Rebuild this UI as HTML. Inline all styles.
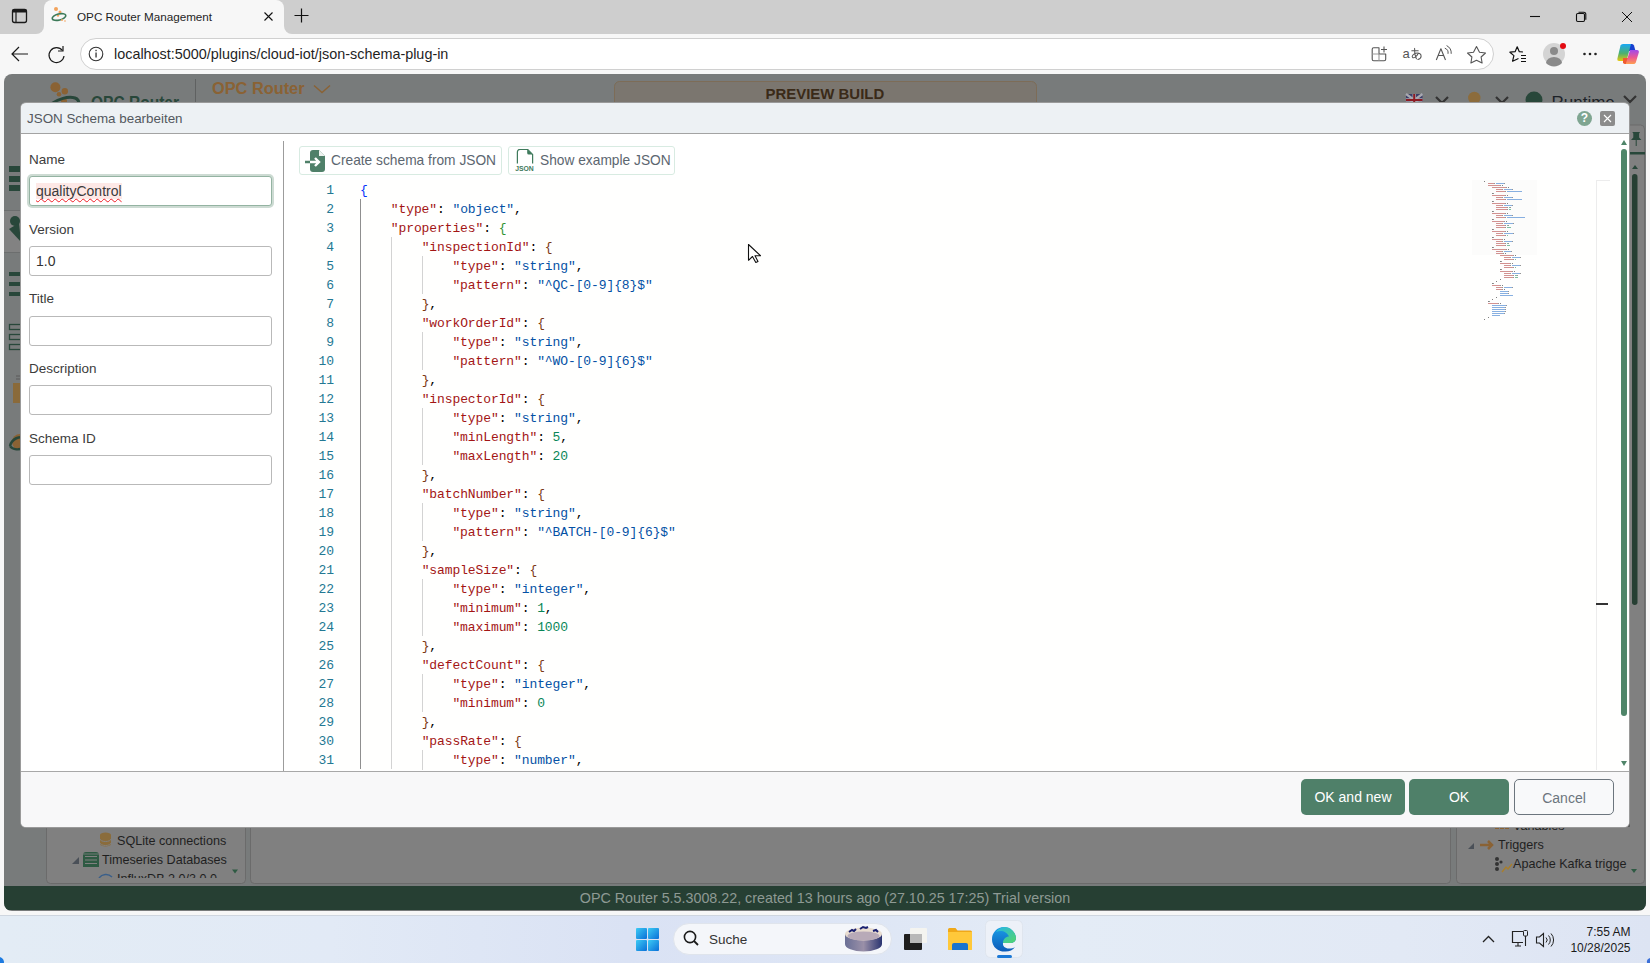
<!DOCTYPE html>
<html><head><meta charset="utf-8">
<style>
*{box-sizing:border-box;margin:0;padding:0}
html,body{width:1650px;height:963px;overflow:hidden;background:#f7f7f7;font-family:"Liberation Sans",sans-serif;position:relative}
.a{position:absolute}
#tabstrip{left:0;top:0;width:1650px;height:33px;background:#cecece}
#tab{left:44px;top:0;width:240px;height:34px;background:#f7f7f7;border-radius:8px 8px 0 0}
#addr{left:0;top:33px;width:1650px;height:41px;background:#f7f7f7}
#url{left:80px;top:38px;width:1412px;height:32px;background:#fff;border:1px solid #d4d4d4;border-radius:16px}
#content{left:4px;top:74px;width:1642px;height:837px;background:#787b7b;border-radius:8px;overflow:hidden}
#dlg{left:20px;top:102px;width:1610px;height:726px;background:linear-gradient(#edf1f4 0 3px,#fff 3px);border-radius:6px;overflow:hidden;border:1px solid #9a9a9a}
#dlghead{left:0;top:0;width:100%;height:30px;background:#edf1f4;border-bottom:1px solid #a3a3a3}
#dlgtitle{left:6px;top:7px;font-size:13.4px;color:#53585e}
#foot{left:0;top:667px;width:100%;height:58px;background:#f8f8f9;border-top:1px solid #a8a8a8}
.lbl{position:absolute;left:8px;font-size:13.5px;color:#3c3c3c}
.inp{position:absolute;left:8px;width:243px;height:30px;border:1px solid #b9b9b9;border-radius:3px;background:#fff;font-size:14px;color:#333}
.btn{position:absolute;top:7px;height:36px;border-radius:5px;font-size:14px;text-align:center;line-height:36px}
.code{font-family:"Liberation Mono",monospace;font-size:13px;letter-spacing:-0.1px;white-space:pre;line-height:19px}
.ln{position:absolute;left:0;top:1px;width:34px;text-align:right;color:#237893;font-family:"Liberation Mono",monospace;font-size:13px;line-height:19px}
.k{color:#a31515}.s{color:#0451a5}.n{color:#098658}.b1{color:#0431fa}.b2{color:#319331}.b3{color:#7b3814}
#status{left:0;top:812px;width:100%;height:24px;background:#263f33;color:#8e9a94;font-size:14.3px;text-align:center;line-height:24px}
.gbtn{background:#4f8069;color:#fff}
.cbtn{background:#f8f9fa;color:#6c757d;border:1px solid #6c757d}
.focus{border:1px solid #94b3a2;box-shadow:0 0 0 2px #cddbd3}
.sp{position:absolute;left:6px;top:6px;background:#fde8e6;text-decoration:underline wavy #f01c23;text-decoration-skip-ink:none;text-underline-offset:1.5px;text-decoration-thickness:1px;color:#3a3a3a}
.tbtn{position:absolute;top:42px;height:29px;border:1px solid #d8ebe2;border-radius:3px;background:#fff;font-size:13.75px;color:#5c6670}
.tbtn .ic{position:absolute;left:4px;top:2px}
.tbtn span{position:absolute;top:6px;white-space:nowrap}
#editor{left:279px;top:76px;width:1320px;height:590px;overflow:hidden;background:#fffffe}
.guide{position:absolute;width:1px;background:#d3d3d3}
#taskbar{left:0;top:915px;width:1650px;height:48px;background:linear-gradient(90deg,#e3ecf5 0%,#e2eaf6 20%,#dae2f4 38%,#dde5f5 50%,#e4ecf6 65%,#e2e9f5 85%,#dde4f3 100%)}
</style></head><body>
<div class="a" style="left:0;top:0;width:44px;height:34px;background:#cecece;border-bottom-right-radius:8px"></div>
<div class="a" style="left:284px;top:0;width:1366px;height:34px;background:#cecece;border-bottom-left-radius:8px"></div>
<div class="a" style="left:36px;top:0;width:256px;height:8px;background:#cecece"></div>
<div id="tab" class="a"></div>
<svg class="a" style="left:0;top:0" width="1650" height="74">
 <rect x="12.5" y="9.5" width="14" height="13" rx="2" fill="none" stroke="#1a1a1a" stroke-width="1.3"/>
 <rect x="12.5" y="9.5" width="14" height="3" fill="#1a1a1a"/>
 <line x1="16" y1="12" x2="16" y2="22" stroke="#1a1a1a" stroke-width="1.2"/>
 <circle cx="56" cy="9" r="2" fill="#f3a35c"/><circle cx="60" cy="12" r="1.5" fill="#f3a35c"/><circle cx="58" cy="15.5" r="1.2" fill="#f3a35c"/>
 <ellipse cx="59" cy="17" rx="7" ry="3" fill="none" stroke="#3c7a58" stroke-width="1.6" transform="rotate(-15 59 17)"/>
 <circle cx="62" cy="20" r="1" fill="#f3a35c"/><circle cx="65" cy="21" r="0.8" fill="#f3a35c"/>
 <text x="77" y="20.5" font-family="Liberation Sans" font-size="11.7" fill="#1f1f1f">OPC Router Management</text>
 <path d="M264.5 12.5l8 8M272.5 12.5l-8 8" stroke="#111" stroke-width="1.1"/>
 <path d="M294.5 15.5h14M301.5 8.5v14" stroke="#111" stroke-width="1.2"/>
 <path d="M1530 16.5h10" stroke="#111" stroke-width="1.1"/>
 <rect x="1576.5" y="13.5" width="8" height="8" rx="1.2" fill="none" stroke="#111" stroke-width="1.1"/>
 <path d="M1578.5 12.2h5.3a2 2 0 0 1 2 2v5.5" fill="none" stroke="#111" stroke-width="1.1"/>
 <path d="M1622 12l10 10M1632 12l-10 10" stroke="#111" stroke-width="1"/>
 <path d="M28 54H12.5M19 47l-7 7 7 7" fill="none" stroke="#1a1a1a" stroke-width="1.2"/>
 <path d="M62.5 50.5A7.5 7.5 0 1 0 64 56" fill="none" stroke="#1a1a1a" stroke-width="1.2"/>
 <path d="M63 46v5h-5" fill="none" stroke="#1a1a1a" stroke-width="1.2"/>
 <rect x="80.5" y="38.5" width="1413" height="31" rx="15.5" fill="#fff" stroke="#d0d0d0"/>
 <circle cx="96" cy="54" r="6.8" fill="none" stroke="#333" stroke-width="1.1"/>
 <rect x="95.4" y="52.5" width="1.3" height="5" fill="#333"/><rect x="95.4" y="49.8" width="1.3" height="1.4" fill="#333"/>
 <text x="114" y="59" font-family="Liberation Sans" font-size="14.4" fill="#1f1f1f">localhost:5000/plugins/cloud-iot/json-schema-plug-in</text>
 <g fill="none" stroke="#555" stroke-width="1.1" stroke-linejoin="round">
  <path d="M1379 47.7h-5.3a1.5 1.5 0 0 0-1.5 1.5v10a1.5 1.5 0 0 0 1.5 1.5h10.5a1.5 1.5 0 0 0 1.5-1.5v-5.2h-6.7z"/>
  <path d="M1379 54v6.7M1372.2 54h6.8" stroke="#999"/>
  <path d="M1384 46.5v6M1381 49.5h6"/>
  <path d="M1436.3 60l4.6-11.3 4.6 11.3M1438.2 55.5h5.4"/>
  <path d="M1444.8 48.2a5 5 0 0 1 3.2 5.6M1446.6 45.6a8.5 8.5 0 0 1 4.6 8.2" stroke-width="1"/>
  <path d="M1467.5 53l6-.8 3-5.7 3 5.7 6 .8-4.4 4 1 6-5.6-2.8-5.6 2.8 1-6z"/>
 </g>
 <g fill="none" stroke="#111" stroke-width="1.2" stroke-linejoin="round">
  <path d="M1518.5 58.5L1512.6 61.2 1513.9 55.6 1509.9 52.2 1515.1 51.7 1517.2 46.8 1519.3 51.7 1523 52"/>
  <path d="M1521 55.5h5M1521 58.5h5M1521 61.5h5" stroke-width="1"/>
 </g>
 <text x="1402.5" y="57.6" font-family="Liberation Sans" font-size="13" fill="#555">a</text>
 <path d="M1411.8 50.8h6.4M1414.6 48.4c-.3 3.5.2 7 1.8 10.4M1418.3 53.2c-1.8 3.8-4.6 5.4-5.8 4.2-1.1-1.2 1.2-4.4 4.6-4.4 2.5 0 4 1.5 4 3.2 0 1.6-1.4 2.8-3.2 3.3" fill="none" stroke="#555" stroke-width="1.05" stroke-linecap="round"/>
 <circle cx="1554" cy="54" r="11" fill="#d4d4d4"/>
 <circle cx="1554" cy="51" r="4" fill="#8a8a8a"/>
 <path d="M1546 63a8 6 0 0 1 16 0a11 11 0 0 1-16 0z" fill="#8a8a8a"/>
 <circle cx="1563" cy="46" r="3" fill="#e30b12"/>
 <circle cx="1584.5" cy="54" r="1.3" fill="#222"/><circle cx="1590" cy="54" r="1.3" fill="#222"/><circle cx="1595.5" cy="54" r="1.3" fill="#222"/>
 <defs><linearGradient id="cp1" x1="0" y1="0" x2="0" y2="1"><stop offset="0" stop-color="#18a8f5"/><stop offset=".55" stop-color="#4cb070"/><stop offset="1" stop-color="#e8c80a"/></linearGradient>
 <linearGradient id="cp2" x1="0" y1="0" x2="0" y2="1"><stop offset="0" stop-color="#a048ec"/><stop offset=".55" stop-color="#ee5890"/><stop offset="1" stop-color="#ffa050"/></linearGradient></defs>
 <g transform="translate(1617 44)">
  <path d="M12 0H15Q16.5 0 17 1.5L18.5 7H11z" fill="#1640d0"/>
  <path d="M3.5 1.5Q4 0 6 0H14L9.5 17H2Q0 17 .3 15z" fill="url(#cp1)"/>
  <path d="M6 14H11.5L9.5 20H8Q6.5 20 6 18.5z" fill="#f05a30"/>
  <path d="M13 6H20Q22.3 6 21.8 8.5L18.8 18.5Q18.2 20 16.5 20H8.8z" fill="url(#cp2)"/>
 </g>
</svg>
<div id="content" class="a">
  <div class="a" style="left:0;top:136px;width:16px;height:43px;background:#828282;border-top:1px solid #6c6e6e;border-bottom:1px solid #6c6e6e"></div>
  <svg class="a" style="left:0;top:0" width="1642" height="838">
   <g fill="#28473a">
    <rect x="5" y="92" width="12" height="6"/><rect x="5" y="102" width="12" height="6"/><rect x="5" y="111" width="12" height="6"/>
    <circle cx="11" cy="147" r="5"/><path d="M5 155l10-6 2 19z"/>
    <rect x="5" y="198" width="12" height="4"/><rect x="5" y="208" width="12" height="4"/><rect x="5" y="218" width="12" height="4"/>
   </g>
   <g fill="none" stroke="#28473a" stroke-width="1.3">
    <rect x="5.5" y="250.5" width="12" height="5"/><rect x="5.5" y="260.5" width="12" height="5"/><rect x="5.5" y="270.5" width="12" height="5"/>
   </g>
   <rect x="9" y="309" width="8" height="20" fill="#8a6a3a"/>
   <path d="M12 302h5M12 305h5" stroke="#5a5a5a" stroke-width="1"/>
   <circle cx="16" cy="368" r="8" fill="#8a6234"/>
   <path d="M6 372c2-8 10-10 14-8M6 372c3 4 9 4 14 2" fill="none" stroke="#28473a" stroke-width="2.5"/>
   <!-- header logo -->
   <circle cx="51.4" cy="13.2" r="5" fill="#8a6234"/><circle cx="60.8" cy="17.3" r="3.2" fill="#8a6234"/><circle cx="55" cy="20.3" r="2.3" fill="#8a6234"/>
   <circle cx="60" cy="27" r="3" fill="#8a6234"/>
   <path d="M47 30c7-5 17-8 24-6 3 1 4 3 4 6" fill="none" stroke="#28473a" stroke-width="3"/>
   <text x="87" y="35" font-family="Liberation Sans" font-weight="bold" font-size="19" fill="#28473a" textLength="88" lengthAdjust="spacingAndGlyphs">OPC Router</text>
   <rect x="191" y="5" width="1" height="25" fill="#5f6161"/>
   <text x="208" y="19.7" font-family="Liberation Sans" font-weight="bold" font-size="15.6" fill="#8a6234" textLength="92.5" lengthAdjust="spacingAndGlyphs">OPC Router</text>
   <path d="M310 11.5l8 7 8-7" fill="none" stroke="#8a6234" stroke-width="1.4"/>
   <circle cx="216" cy="34" r="6" fill="#222"/>
   <rect x="610.5" y="7.5" width="422" height="30" rx="5" fill="#7b766f" stroke="#7d6c57"/>
   <text x="761.5" y="25.3" font-family="Liberation Sans" font-weight="bold" font-size="14" fill="#3a2a18" textLength="118.7" lengthAdjust="spacingAndGlyphs">PREVIEW BUILD</text>
   <g>
    <rect x="1402" y="20" width="16.5" height="12" fill="#3b3f6a"/>
    <path d="M1402 20l16.5 12M1418.5 20l-16.5 12" stroke="#a8a8b0" stroke-width="2.2"/>
    <path d="M1410.2 20v12M1402 26h16.5" stroke="#a8a8b0" stroke-width="3.4"/>
    <path d="M1410.2 20v12M1402 26h16.5" stroke="#8c1a22" stroke-width="2"/>
   </g>
   <path d="M1432 23l6 6 6-6M1492 23l6 6 6-6M1620 22l6 6 6-6" fill="none" stroke="#333" stroke-width="2.2"/>
   <circle cx="1470.3" cy="24" r="6.2" fill="#8c6c3c"/>
   <circle cx="1530" cy="26" r="8.5" fill="#28473a"/>
   <text x="1547.5" y="34" font-family="Liberation Sans" font-size="17" fill="#1c2228">Runtime</text>
   <!-- right strip -->
   <path d="M1452.5 51h184a4 4 0 0 1 4 4v750.5a4 4 0 0 1-4 4h-180a4 4 0 0 1-4-4z" fill="#808080" stroke="#6b6b6b"/>
   <rect x="1624" y="55" width="2" height="698" fill="#5d5d5d"/>
   <path d="M1628.3 58h7.8l-1 1.6v3.8l2.3 2.6h-10.4l2.3-2.6v-3.8z" fill="#28473a"/><rect x="1631.7" y="66" width="1" height="6" fill="#28473a"/>
   <rect x="1626" y="78" width="15" height="2.5" fill="#28473a"/>
   <path d="M1628 95l3-4 3 4z" fill="#28473a"/>
   <rect x="1628" y="100" width="5.5" height="431" rx="2.7" fill="#263f33"/>
   <!-- bottom panels -->
   <defs><clipPath id="cpl"><rect x="43" y="740" width="198" height="64"/></clipPath><clipPath id="cpr"><rect x="1453" y="740" width="170" height="64"/></clipPath></defs>
   <path d="M42.5 700v105.5a4 4 0 0 0 4 4h191a4 4 0 0 0 4-4V700z" fill="#808080" stroke="#6b6b6b"/>
   <path d="M246.5 700v105.5a4 4 0 0 0 4 4h1192a4 4 0 0 0 4-4V700z" fill="#808080" stroke="#6b6b6b"/>
   
   <g font-family="Liberation Sans" font-size="12.6" fill="#1f1f1f">
    <g clip-path="url(#cpl)">
    <text x="113" y="771">SQLite connections</text>
    <text x="98" y="790">Timeseries Databases</text>
    <text x="113" y="809">InfluxDB 2.0/3.0.0</text>
    <path d="M95 804c3-4 9-5 13-1" fill="none" stroke="#3a5f8a" stroke-width="1.5"/>
    </g>
    <g clip-path="url(#cpr)">
    <text x="1494" y="775">Triggers</text>
    <text x="1509" y="794">Apache Kafka trigge</text>
    <text x="1509" y="756">Variables</text>
    <text x="1509" y="813">MQTT trigger</text>
    <rect x="1491" y="750" width="4" height="5" fill="#8a6234"/><rect x="1496" y="750" width="4" height="5" fill="#8a6234"/><rect x="1501" y="750" width="4" height="5" fill="#8a6234"/>
    <circle cx="1494" cy="806" r="1.3" fill="#333"/><circle cx="1499" cy="806" r="1.3" fill="#333"/>
    </g>
   </g>
   <path d="M75 790v-7l-7 7z" fill="#4a5058"/><path d="M1470 775v-6l-6 6z" fill="#4a5058"/>
   <path d="M96 761a5.5 2.5 0 0 1 11 0v9a5.5 2.5 0 0 1-11 0z" fill="#8a6c3c"/><path d="M96 765a5.5 2.5 0 0 0 11 0M96 769a5.5 2.5 0 0 0 11 0" fill="none" stroke="#808080" stroke-width="1"/>
   <path d="M79 781a3 3 0 0 1 3-3h10a3 3 0 0 1 3 3v12h-16z" fill="#2e5a43"/><path d="M81 782.5h12M81 786h12M81 789.5h12" stroke="#808080" stroke-width="1.2"/><path d="M79 780h16" stroke="#808080" stroke-width=".8"/>
   <path d="M228 795.5l3 4 3-4z" fill="#2e5a43"/>
   <path d="M1627 795l3 4 3-4z" fill="#2e5a43"/>
   <path d="M1476 771h12M1484 767l4 4-4 4" fill="none" stroke="#8a6234" stroke-width="2.5"/>
   <circle cx="1493" cy="785" r="2" fill="#333"/><circle cx="1493" cy="790" r="2" fill="#333"/><circle cx="1493" cy="795" r="2" fill="#333"/><circle cx="1497" cy="788" r="1.6" fill="#333"/>
   <path d="M1498 798l4-5 2 2 4-5" fill="none" stroke="#a87e2c" stroke-width="1.4"/>
  </svg>
  <div id="status" class="a">OPC Router 5.5.3008.22, created 13 hours ago (27.10.25 17:25) Trial version</div>
</div>
<div id="dlg" class="a"><div class="a" style="left:0;top:1px;width:100%;height:100%">
  <div id="dlghead" class="a"><div id="dlgtitle" class="a">JSON Schema bearbeiten</div>
  <div class="a" style="left:1556px;top:7px;width:15px;height:15px;border-radius:50%;background:#7fa591;color:#fff;font-size:12px;font-weight:bold;text-align:center;line-height:15px">?</div>
  <svg class="a" style="left:1579px;top:7px" width="15" height="15"><rect width="15" height="15" rx="2" fill="#8c8c8c"/><path d="M4 4l7 7M11 4l-7 7" stroke="#fff" stroke-width="1.1"/></svg>
  </div>
  <div id="foot" class="a">
    <div class="btn gbtn" style="left:1280px;width:104px">OK and new</div>
    <div class="btn gbtn" style="left:1388px;width:100px">OK</div>
    <div class="btn cbtn" style="left:1493px;width:100px">Cancel</div>
  </div>
  <div class="lbl" style="top:48px">Name</div>
  <div class="inp focus" style="top:72px"><span class="sp">qualityControl</span></div>
  <div class="lbl" style="top:118px">Version</div>
  <div class="inp" style="top:142px"><span style="position:absolute;left:6px;top:6px">1.0</span></div>
  <div class="lbl" style="top:187px">Title</div>
  <div class="inp" style="top:212px"></div>
  <div class="lbl" style="top:257px">Description</div>
  <div class="inp" style="top:281px"></div>
  <div class="lbl" style="top:327px">Schema ID</div>
  <div class="inp" style="top:351px"></div>
  <div class="a" style="left:262px;top:37px;width:1px;height:630px;background:#9c9c9c"></div>
  <div class="tbtn" style="left:278px;width:203px"><svg class="ic" width="24" height="24" viewBox="0 0 24 24"><path d="M9 1h6l6 6v13a3 3 0 0 1-3 3H9a3 3 0 0 1-3-3V4a3 3 0 0 1 3-3z" fill="#4f8069"/><path d="M15 1v6h6" fill="#fff" opacity=".9"/><path d="M1 13h14M11 9l4 4-4 4" stroke="#fff" stroke-width="2.4" fill="none"/><path d="M1 13h5" stroke="#4f8069" stroke-width="2.4"/></svg><span style="left:31px">Create schema from JSON</span></div>
  <div class="tbtn" style="left:487px;width:167px"><svg class="ic" width="24" height="24" viewBox="0 0 24 24"><path d="M4.4 14.6V3A2.6 2.6 0 0 1 7 .4h7.6l5 5v9.2" stroke="#3f7a5c" stroke-width="1.25" fill="none"/><path d="M14.2 .6v3.4a1.6 1.6 0 0 0 1.6 1.6h3.6z" fill="#3f7a5c"/><text x="2.2" y="21.8" font-size="7.4" font-family="Liberation Sans" font-weight="bold" fill="#3f7a5c" textLength="18.6" lengthAdjust="spacingAndGlyphs">JSON</text></svg><span style="left:31px">Show example JSON</span></div>
  <div id="editor" class="a">
    <div class="ln">1<br>2<br>3<br>4<br>5<br>6<br>7<br>8<br>9<br>10<br>11<br>12<br>13<br>14<br>15<br>16<br>17<br>18<br>19<br>20<br>21<br>22<br>23<br>24<br>25<br>26<br>27<br>28<br>29<br>30<br>31</div>
    <div class="guide" style="left:60px;top:19px;height:570px;background:#8f8f8f"></div>
    <div class="guide" style="left:91px;top:57px;height:532px"></div>
    <div class="guide" style="left:122px;top:76px;height:38px"></div><div class="guide" style="left:122px;top:152px;height:38px"></div><div class="guide" style="left:122px;top:228px;height:57px"></div><div class="guide" style="left:122px;top:323px;height:38px"></div><div class="guide" style="left:122px;top:399px;height:57px"></div><div class="guide" style="left:122px;top:494px;height:38px"></div><div class="guide" style="left:122px;top:570px;height:20px"></div>
    <div class="code a" style="left:60px;top:1px"><span class="b1">{</span>
    <span class="k">"type"</span>: <span class="s">"object"</span>,
    <span class="k">"properties"</span>: <span class="b2">{</span>
        <span class="k">"inspectionId"</span>: <span class="b3">{</span>
            <span class="k">"type"</span>: <span class="s">"string"</span>,
            <span class="k">"pattern"</span>: <span class="s">"^QC-[0-9]{8}$"</span>
        <span class="b3">}</span>,
        <span class="k">"workOrderId"</span>: <span class="b3">{</span>
            <span class="k">"type"</span>: <span class="s">"string"</span>,
            <span class="k">"pattern"</span>: <span class="s">"^WO-[0-9]{6}$"</span>
        <span class="b3">}</span>,
        <span class="k">"inspectorId"</span>: <span class="b3">{</span>
            <span class="k">"type"</span>: <span class="s">"string"</span>,
            <span class="k">"minLength"</span>: <span class="n">5</span>,
            <span class="k">"maxLength"</span>: <span class="n">20</span>
        <span class="b3">}</span>,
        <span class="k">"batchNumber"</span>: <span class="b3">{</span>
            <span class="k">"type"</span>: <span class="s">"string"</span>,
            <span class="k">"pattern"</span>: <span class="s">"^BATCH-[0-9]{6}$"</span>
        <span class="b3">}</span>,
        <span class="k">"sampleSize"</span>: <span class="b3">{</span>
            <span class="k">"type"</span>: <span class="s">"integer"</span>,
            <span class="k">"minimum"</span>: <span class="n">1</span>,
            <span class="k">"maximum"</span>: <span class="n">1000</span>
        <span class="b3">}</span>,
        <span class="k">"defectCount"</span>: <span class="b3">{</span>
            <span class="k">"type"</span>: <span class="s">"integer"</span>,
            <span class="k">"minimum"</span>: <span class="n">0</span>
        <span class="b3">}</span>,
        <span class="k">"passRate"</span>: <span class="b3">{</span>
            <span class="k">"type"</span>: <span class="s">"number"</span>,</div>
    <div class="a" style="left:1172px;top:0;width:65px;height:75px;background:rgba(100,100,100,.018)"></div><svg class="a" style="left:1184px;top:1px" width="80" height="140"><rect x="0" y="0" width="1" height="1" fill="#333" opacity=".62"/><rect x="4" y="2" width="6" height="1" fill="#b8504f" opacity=".62"/><rect x="10" y="2" width="1" height="1" fill="#555" opacity=".62"/><rect x="12" y="2" width="8" height="1" fill="#3f7fcf" opacity=".62"/><rect x="20" y="2" width="1" height="1" fill="#555" opacity=".62"/><rect x="4" y="4" width="12" height="1" fill="#b8504f" opacity=".62"/><rect x="16" y="4" width="1" height="1" fill="#555" opacity=".62"/><rect x="18" y="4" width="1" height="1" fill="#333" opacity=".62"/><rect x="8" y="6" width="14" height="1" fill="#b8504f" opacity=".62"/><rect x="22" y="6" width="1" height="1" fill="#555" opacity=".62"/><rect x="24" y="6" width="1" height="1" fill="#333" opacity=".62"/><rect x="12" y="8" width="6" height="1" fill="#b8504f" opacity=".62"/><rect x="18" y="8" width="1" height="1" fill="#555" opacity=".62"/><rect x="20" y="8" width="8" height="1" fill="#3f7fcf" opacity=".62"/><rect x="28" y="8" width="1" height="1" fill="#555" opacity=".62"/><rect x="12" y="10" width="9" height="1" fill="#b8504f" opacity=".62"/><rect x="21" y="10" width="1" height="1" fill="#555" opacity=".62"/><rect x="23" y="10" width="15" height="1" fill="#3f7fcf" opacity=".62"/><rect x="8" y="12" width="1" height="1" fill="#333" opacity=".62"/><rect x="9" y="12" width="1" height="1" fill="#555" opacity=".62"/><rect x="8" y="14" width="13" height="1" fill="#b8504f" opacity=".62"/><rect x="21" y="14" width="1" height="1" fill="#555" opacity=".62"/><rect x="23" y="14" width="1" height="1" fill="#333" opacity=".62"/><rect x="12" y="16" width="6" height="1" fill="#b8504f" opacity=".62"/><rect x="18" y="16" width="1" height="1" fill="#555" opacity=".62"/><rect x="20" y="16" width="8" height="1" fill="#3f7fcf" opacity=".62"/><rect x="28" y="16" width="1" height="1" fill="#555" opacity=".62"/><rect x="12" y="18" width="9" height="1" fill="#b8504f" opacity=".62"/><rect x="21" y="18" width="1" height="1" fill="#555" opacity=".62"/><rect x="23" y="18" width="15" height="1" fill="#3f7fcf" opacity=".62"/><rect x="8" y="20" width="1" height="1" fill="#333" opacity=".62"/><rect x="9" y="20" width="1" height="1" fill="#555" opacity=".62"/><rect x="8" y="22" width="13" height="1" fill="#b8504f" opacity=".62"/><rect x="21" y="22" width="1" height="1" fill="#555" opacity=".62"/><rect x="23" y="22" width="1" height="1" fill="#333" opacity=".62"/><rect x="12" y="24" width="6" height="1" fill="#b8504f" opacity=".62"/><rect x="18" y="24" width="1" height="1" fill="#555" opacity=".62"/><rect x="20" y="24" width="8" height="1" fill="#3f7fcf" opacity=".62"/><rect x="28" y="24" width="1" height="1" fill="#555" opacity=".62"/><rect x="12" y="26" width="11" height="1" fill="#b8504f" opacity=".62"/><rect x="23" y="26" width="1" height="1" fill="#555" opacity=".62"/><rect x="25" y="26" width="1" height="1" fill="#2f9a6a" opacity=".62"/><rect x="26" y="26" width="1" height="1" fill="#555" opacity=".62"/><rect x="12" y="28" width="11" height="1" fill="#b8504f" opacity=".62"/><rect x="23" y="28" width="1" height="1" fill="#555" opacity=".62"/><rect x="25" y="28" width="2" height="1" fill="#2f9a6a" opacity=".62"/><rect x="8" y="30" width="1" height="1" fill="#333" opacity=".62"/><rect x="9" y="30" width="1" height="1" fill="#555" opacity=".62"/><rect x="8" y="32" width="13" height="1" fill="#b8504f" opacity=".62"/><rect x="21" y="32" width="1" height="1" fill="#555" opacity=".62"/><rect x="23" y="32" width="1" height="1" fill="#333" opacity=".62"/><rect x="12" y="34" width="6" height="1" fill="#b8504f" opacity=".62"/><rect x="18" y="34" width="1" height="1" fill="#555" opacity=".62"/><rect x="20" y="34" width="8" height="1" fill="#3f7fcf" opacity=".62"/><rect x="28" y="34" width="1" height="1" fill="#555" opacity=".62"/><rect x="12" y="36" width="9" height="1" fill="#b8504f" opacity=".62"/><rect x="21" y="36" width="1" height="1" fill="#555" opacity=".62"/><rect x="23" y="36" width="18" height="1" fill="#3f7fcf" opacity=".62"/><rect x="8" y="38" width="1" height="1" fill="#333" opacity=".62"/><rect x="9" y="38" width="1" height="1" fill="#555" opacity=".62"/><rect x="8" y="40" width="12" height="1" fill="#b8504f" opacity=".62"/><rect x="20" y="40" width="1" height="1" fill="#555" opacity=".62"/><rect x="22" y="40" width="1" height="1" fill="#333" opacity=".62"/><rect x="12" y="42" width="6" height="1" fill="#b8504f" opacity=".62"/><rect x="18" y="42" width="1" height="1" fill="#555" opacity=".62"/><rect x="20" y="42" width="9" height="1" fill="#3f7fcf" opacity=".62"/><rect x="29" y="42" width="1" height="1" fill="#555" opacity=".62"/><rect x="12" y="44" width="9" height="1" fill="#b8504f" opacity=".62"/><rect x="21" y="44" width="1" height="1" fill="#555" opacity=".62"/><rect x="23" y="44" width="1" height="1" fill="#2f9a6a" opacity=".62"/><rect x="24" y="44" width="1" height="1" fill="#555" opacity=".62"/><rect x="12" y="46" width="9" height="1" fill="#b8504f" opacity=".62"/><rect x="21" y="46" width="1" height="1" fill="#555" opacity=".62"/><rect x="23" y="46" width="4" height="1" fill="#2f9a6a" opacity=".62"/><rect x="8" y="48" width="1" height="1" fill="#333" opacity=".62"/><rect x="9" y="48" width="1" height="1" fill="#555" opacity=".62"/><rect x="8" y="50" width="13" height="1" fill="#b8504f" opacity=".62"/><rect x="21" y="50" width="1" height="1" fill="#555" opacity=".62"/><rect x="23" y="50" width="1" height="1" fill="#333" opacity=".62"/><rect x="12" y="52" width="6" height="1" fill="#b8504f" opacity=".62"/><rect x="18" y="52" width="1" height="1" fill="#555" opacity=".62"/><rect x="20" y="52" width="9" height="1" fill="#3f7fcf" opacity=".62"/><rect x="29" y="52" width="1" height="1" fill="#555" opacity=".62"/><rect x="12" y="54" width="9" height="1" fill="#b8504f" opacity=".62"/><rect x="21" y="54" width="1" height="1" fill="#555" opacity=".62"/><rect x="23" y="54" width="1" height="1" fill="#2f9a6a" opacity=".62"/><rect x="8" y="56" width="1" height="1" fill="#333" opacity=".62"/><rect x="9" y="56" width="1" height="1" fill="#555" opacity=".62"/><rect x="8" y="58" width="10" height="1" fill="#b8504f" opacity=".62"/><rect x="18" y="58" width="1" height="1" fill="#555" opacity=".62"/><rect x="20" y="58" width="1" height="1" fill="#333" opacity=".62"/><rect x="12" y="60" width="6" height="1" fill="#b8504f" opacity=".62"/><rect x="18" y="60" width="1" height="1" fill="#555" opacity=".62"/><rect x="20" y="60" width="8" height="1" fill="#3f7fcf" opacity=".62"/><rect x="28" y="60" width="1" height="1" fill="#555" opacity=".62"/><rect x="12" y="62" width="9" height="1" fill="#b8504f" opacity=".62"/><rect x="21" y="62" width="1" height="1" fill="#555" opacity=".62"/><rect x="23" y="62" width="1" height="1" fill="#2f9a6a" opacity=".62"/><rect x="24" y="62" width="1" height="1" fill="#555" opacity=".62"/><rect x="12" y="64" width="9" height="1" fill="#b8504f" opacity=".62"/><rect x="21" y="64" width="1" height="1" fill="#555" opacity=".62"/><rect x="23" y="64" width="3" height="1" fill="#2f9a6a" opacity=".62"/><rect x="8" y="66" width="1" height="1" fill="#333" opacity=".62"/><rect x="9" y="66" width="1" height="1" fill="#555" opacity=".62"/><rect x="8" y="68" width="14" height="1" fill="#b8504f" opacity=".62"/><rect x="22" y="68" width="1" height="1" fill="#555" opacity=".62"/><rect x="24" y="68" width="1" height="1" fill="#333" opacity=".62"/><rect x="12" y="70" width="6" height="1" fill="#b8504f" opacity=".62"/><rect x="18" y="70" width="1" height="1" fill="#555" opacity=".62"/><rect x="20" y="70" width="7" height="1" fill="#3f7fcf" opacity=".62"/><rect x="27" y="70" width="1" height="1" fill="#555" opacity=".62"/><rect x="12" y="72" width="7" height="1" fill="#b8504f" opacity=".62"/><rect x="19" y="72" width="1" height="1" fill="#555" opacity=".62"/><rect x="21" y="72" width="1" height="1" fill="#333" opacity=".62"/><rect x="16" y="74" width="13" height="1" fill="#b8504f" opacity=".62"/><rect x="29" y="74" width="1" height="1" fill="#555" opacity=".62"/><rect x="31" y="74" width="1" height="1" fill="#333" opacity=".62"/><rect x="20" y="76" width="6" height="1" fill="#b8504f" opacity=".62"/><rect x="26" y="76" width="1" height="1" fill="#555" opacity=".62"/><rect x="28" y="76" width="8" height="1" fill="#3f7fcf" opacity=".62"/><rect x="36" y="76" width="1" height="1" fill="#555" opacity=".62"/><rect x="20" y="78" width="9" height="1" fill="#b8504f" opacity=".62"/><rect x="29" y="78" width="1" height="1" fill="#555" opacity=".62"/><rect x="31" y="78" width="1" height="1" fill="#2f9a6a" opacity=".62"/><rect x="16" y="80" width="1" height="1" fill="#333" opacity=".62"/><rect x="17" y="80" width="1" height="1" fill="#555" opacity=".62"/><rect x="16" y="82" width="10" height="1" fill="#b8504f" opacity=".62"/><rect x="26" y="82" width="1" height="1" fill="#555" opacity=".62"/><rect x="28" y="82" width="1" height="1" fill="#333" opacity=".62"/><rect x="20" y="84" width="6" height="1" fill="#b8504f" opacity=".62"/><rect x="26" y="84" width="1" height="1" fill="#555" opacity=".62"/><rect x="28" y="84" width="8" height="1" fill="#3f7fcf" opacity=".62"/><rect x="36" y="84" width="1" height="1" fill="#555" opacity=".62"/><rect x="20" y="86" width="9" height="1" fill="#b8504f" opacity=".62"/><rect x="29" y="86" width="1" height="1" fill="#555" opacity=".62"/><rect x="31" y="86" width="1" height="1" fill="#2f9a6a" opacity=".62"/><rect x="16" y="88" width="1" height="1" fill="#333" opacity=".62"/><rect x="17" y="88" width="1" height="1" fill="#555" opacity=".62"/><rect x="16" y="90" width="12" height="1" fill="#b8504f" opacity=".62"/><rect x="28" y="90" width="1" height="1" fill="#555" opacity=".62"/><rect x="30" y="90" width="1" height="1" fill="#333" opacity=".62"/><rect x="20" y="92" width="6" height="1" fill="#b8504f" opacity=".62"/><rect x="26" y="92" width="1" height="1" fill="#555" opacity=".62"/><rect x="28" y="92" width="8" height="1" fill="#3f7fcf" opacity=".62"/><rect x="36" y="92" width="1" height="1" fill="#555" opacity=".62"/><rect x="20" y="94" width="9" height="1" fill="#b8504f" opacity=".62"/><rect x="29" y="94" width="1" height="1" fill="#555" opacity=".62"/><rect x="31" y="94" width="2" height="1" fill="#2f9a6a" opacity=".62"/><rect x="33" y="94" width="1" height="1" fill="#555" opacity=".62"/><rect x="20" y="96" width="9" height="1" fill="#b8504f" opacity=".62"/><rect x="29" y="96" width="1" height="1" fill="#555" opacity=".62"/><rect x="31" y="96" width="3" height="1" fill="#2f9a6a" opacity=".62"/><rect x="16" y="98" width="1" height="1" fill="#333" opacity=".62"/><rect x="12" y="100" width="1" height="1" fill="#333" opacity=".62"/><rect x="8" y="102" width="1" height="1" fill="#333" opacity=".62"/><rect x="9" y="102" width="1" height="1" fill="#555" opacity=".62"/><rect x="8" y="104" width="8" height="1" fill="#b8504f" opacity=".62"/><rect x="16" y="104" width="1" height="1" fill="#555" opacity=".62"/><rect x="18" y="104" width="1" height="1" fill="#333" opacity=".62"/><rect x="12" y="106" width="6" height="1" fill="#b8504f" opacity=".62"/><rect x="18" y="106" width="1" height="1" fill="#555" opacity=".62"/><rect x="20" y="106" width="8" height="1" fill="#3f7fcf" opacity=".62"/><rect x="28" y="106" width="1" height="1" fill="#555" opacity=".62"/><rect x="12" y="108" width="6" height="1" fill="#b8504f" opacity=".62"/><rect x="18" y="108" width="1" height="1" fill="#555" opacity=".62"/><rect x="20" y="108" width="1" height="1" fill="#333" opacity=".62"/><rect x="16" y="110" width="8" height="1" fill="#3f7fcf" opacity=".62"/><rect x="24" y="110" width="1" height="1" fill="#555" opacity=".62"/><rect x="16" y="112" width="8" height="1" fill="#3f7fcf" opacity=".62"/><rect x="24" y="112" width="1" height="1" fill="#555" opacity=".62"/><rect x="16" y="114" width="13" height="1" fill="#3f7fcf" opacity=".62"/><rect x="12" y="116" width="1" height="1" fill="#333" opacity=".62"/><rect x="8" y="118" width="1" height="1" fill="#333" opacity=".62"/><rect x="4" y="120" width="1" height="1" fill="#333" opacity=".62"/><rect x="5" y="120" width="1" height="1" fill="#555" opacity=".62"/><rect x="4" y="122" width="10" height="1" fill="#b8504f" opacity=".62"/><rect x="14" y="122" width="1" height="1" fill="#555" opacity=".62"/><rect x="16" y="122" width="1" height="1" fill="#333" opacity=".62"/><rect x="8" y="124" width="14" height="1" fill="#3f7fcf" opacity=".62"/><rect x="22" y="124" width="1" height="1" fill="#555" opacity=".62"/><rect x="8" y="126" width="13" height="1" fill="#3f7fcf" opacity=".62"/><rect x="21" y="126" width="1" height="1" fill="#555" opacity=".62"/><rect x="8" y="128" width="13" height="1" fill="#3f7fcf" opacity=".62"/><rect x="21" y="128" width="1" height="1" fill="#555" opacity=".62"/><rect x="8" y="130" width="13" height="1" fill="#3f7fcf" opacity=".62"/><rect x="21" y="130" width="1" height="1" fill="#555" opacity=".62"/><rect x="8" y="132" width="12" height="1" fill="#3f7fcf" opacity=".62"/><rect x="20" y="132" width="1" height="1" fill="#555" opacity=".62"/><rect x="8" y="134" width="8" height="1" fill="#3f7fcf" opacity=".62"/><rect x="4" y="136" width="1" height="1" fill="#333" opacity=".62"/><rect x="0" y="138" width="1" height="1" fill="#333" opacity=".62"/></svg>
    <div class="a" style="left:1296px;top:0;width:1px;height:590px;background:#ececec"></div>
    <div class="a" style="left:1296px;top:0;width:14px;height:1px;background:#ececec"></div>
    <div class="a" style="left:1296px;top:423px;width:12px;height:2px;background:#333"></div>
  </div>
  <div class="a" style="left:1600px;top:36px;width:0;height:0;border-left:3.5px solid transparent;border-right:3.5px solid transparent;border-bottom:5px solid #4f8569"></div>
  <div class="a" style="left:1600px;top:45px;width:6px;height:567px;border-radius:3px;background:#4f8569"></div>
  <div class="a" style="left:1600px;top:657px;width:0;height:0;border-left:3.5px solid transparent;border-right:3.5px solid transparent;border-top:5px solid #4f8569"></div>
</div></div>
<div id="taskbar" class="a"></div>
<svg class="a" style="left:0;top:910px" width="1650" height="53">
 <rect x="0" y="5" width="1650" height="1" fill="#cfd6df"/>
 <path d="M0 47a6 6 0 0 1 4 6H0z" fill="#1e7be0"/><path d="M1650 48a4 4 0 0 0-3 5h3z" fill="#3a6fd8"/>
 <defs>
  <linearGradient id="wg" x1="0" y1="0" x2="1" y2="1"><stop offset="0" stop-color="#3ccbf4"/><stop offset="1" stop-color="#0a6fd8"/></linearGradient>
  <linearGradient id="fg" x1="0" y1="0" x2="0" y2="1"><stop offset="0" stop-color="#ffd54f"/><stop offset="1" stop-color="#f2a71b"/></linearGradient>
  <linearGradient id="eg" x1="0" y1="0" x2="1" y2="1"><stop offset="0" stop-color="#35c1f1"/><stop offset=".5" stop-color="#1e90e0"/><stop offset="1" stop-color="#36c55a"/></linearGradient>
 </defs>
 <g fill="url(#wg)"><rect x="636" y="18" width="11" height="11" rx="1"/><rect x="648" y="18" width="11" height="11" rx="1"/><rect x="636" y="30" width="11" height="11" rx="1"/><rect x="648" y="30" width="11" height="11" rx="1"/></g>
 <rect x="673.5" y="13.5" width="218" height="31" rx="15.5" fill="#f4f6fa" stroke="#dfe4ec"/>
 <circle cx="690" cy="27" r="5.6" fill="none" stroke="#1a1a1a" stroke-width="1.6"/>
 <path d="M694 31l4 4" stroke="#1a1a1a" stroke-width="1.8"/>
 <text x="709" y="33.6" font-family="Liberation Sans" font-size="13.5" fill="#333">Suche</text>
 <defs><linearGradient id="dr" x1="0" y1="0" x2="1" y2="0"><stop offset="0" stop-color="#6a6f95"/><stop offset=".5" stop-color="#9a90a8"/><stop offset="1" stop-color="#2a3470"/></linearGradient>
 <linearGradient id="eb" x1="0" y1="0" x2="0" y2="1"><stop offset="0" stop-color="#1a9ee8"/><stop offset="1" stop-color="#0c5ab8"/></linearGradient>
 <linearGradient id="eg2" x1="0" y1="0" x2="1" y2="1"><stop offset="0" stop-color="#27b6e8"/><stop offset="1" stop-color="#52d66a"/></linearGradient></defs>
 <path d="M845 24v10a18.5 7.5 0 0 0 37 0V24z" fill="url(#dr)"/>
 <ellipse cx="863.5" cy="24" rx="18.5" ry="6.5" fill="#e8dcd0"/>
 <ellipse cx="863.5" cy="26" rx="16" ry="4.5" fill="#b8aab8"/>
 <path d="M849 22l3-2 2 1 2-2M860 19l3-2 3 1 2-1M873 21l3-1 2 2" stroke="#1a2070" stroke-width="2" fill="none"/>
 <rect x="904" y="24" width="18" height="16" rx="1" fill="#1e1e1e"/>
 <rect x="910" y="18" width="17" height="15" rx="1" fill="#f4f4f0"/>
 <rect x="910" y="24" width="12" height="9" fill="#b8b8b8"/>
 <path d="M948 19.5a1.5 1.5 0 0 1 1.5-1.5h6l2 2.5h13a1.5 1.5 0 0 1 1.5 1.5v17.5h-24z" fill="#f0a818"/>
 <path d="M948 22h24v17a1 1 0 0 1-1 1h-22a1 1 0 0 1-1-1z" fill="#ffc83a"/>
 <path d="M952 40v-5a2 2 0 0 1 2-2h12a2 2 0 0 1 2 2v5z" fill="#1b74d0"/>
 <rect x="985.5" y="10.5" width="37" height="37" rx="5" fill="#edf1f8" stroke="#dfe5ee"/>
 <path d="M1004 17a12 12 0 0 1 12 11c0 3-2.5 5-6 5h-7c-.5 3 2 5.5 6 5.5 2.5 0 4.5-.5 6-1.5-2 3-5.5 4.5-9.5 4.5a12 12 0 0 1-13.5-12A12 12 0 0 1 1004 17z" fill="url(#eb)"/>
 <path d="M1004 17a12 12 0 0 1 12 11c0 3-2.5 5-6 5h-7c0-4 3-6.5 6-6.5-2-5-8-7-13-4.5A12 12 0 0 1 1004 17z" fill="url(#eg2)"/>
 <rect x="997" y="45" width="15" height="3" rx="1.5" fill="#1b78d6"/>
 <path d="M1483 32l5.5-5.5 5.5 5.5" fill="none" stroke="#222" stroke-width="1.3"/>
 <path d="M1523 21.5h-10.5v11h10.5" fill="none" stroke="#222" stroke-width="1.2"/><path d="M1515 36h6M1518 33v3M1525.5 26v10" stroke="#222" stroke-width="1.1"/><rect x="1523.5" y="20.5" width="4" height="5.5" rx="1" fill="none" stroke="#222" stroke-width="1"/>
 <path d="M1536.5 27h3l4-3.5v13l-4-3.5h-3z" fill="none" stroke="#222" stroke-width="1.1"/><path d="M1546 27.5a3.5 3.5 0 0 1 0 5M1548.5 25.5a6.5 6.5 0 0 1 0 9M1551 23.5a9.5 9.5 0 0 1 0 13" fill="none" stroke="#222" stroke-width="1"/>
 <text x="1630.5" y="25.7" text-anchor="end" font-family="Liberation Sans" font-size="12" fill="#1a1a1a">7:55 AM</text>
 <text x="1630.5" y="41.7" text-anchor="end" font-family="Liberation Sans" font-size="12" fill="#1a1a1a">10/28/2025</text>
</svg>
<svg class="a" style="left:740px;top:238px" width="30" height="30"><path d="M8.5 6.5V22.3l4-3.8 3.3 5.9 2.2-1-3-5.7h5.5z" fill="#fff" stroke="#111" stroke-width="1.1" stroke-linejoin="round"/></svg>
</body></html>
